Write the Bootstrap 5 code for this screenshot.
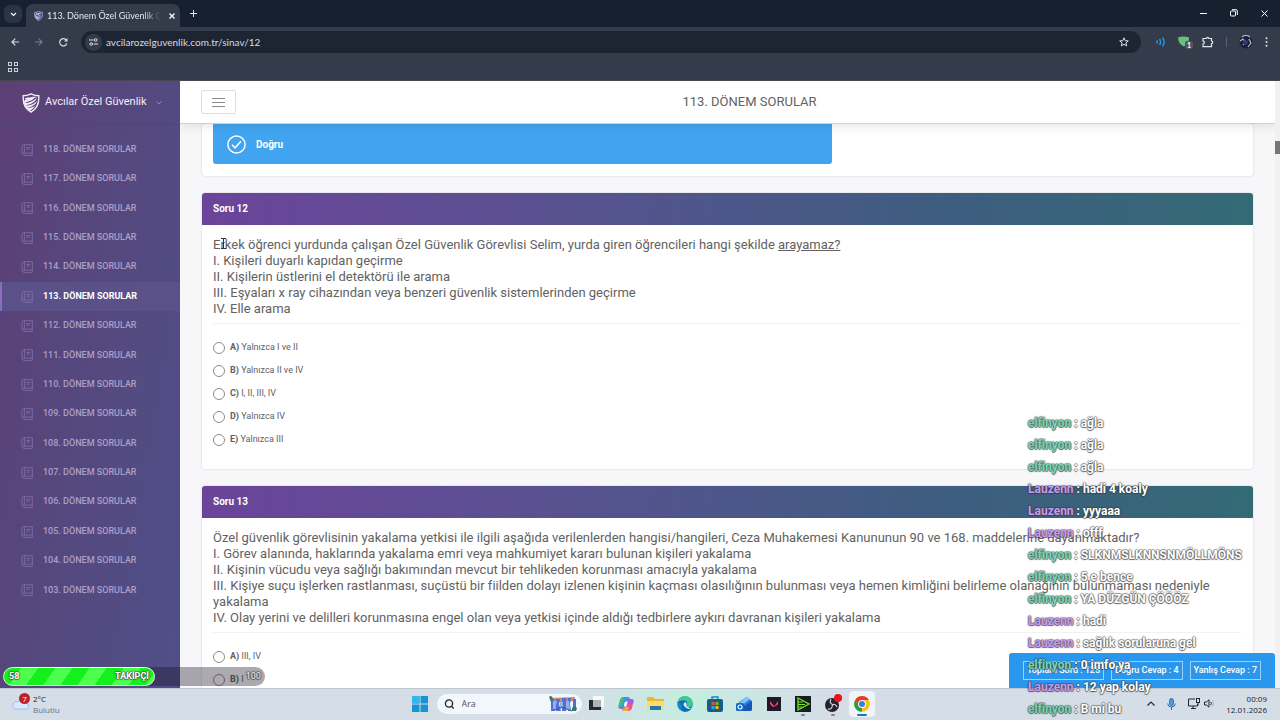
<!DOCTYPE html>
<html lang="tr">
<head>
<meta charset="utf-8">
<meta name="viewport" content="width=device-width, initial-scale=1">
<title>113. Dönem Özel Güvenlik Çıkmış Sorular</title>
<link rel="stylesheet" href="https://cdn.jsdelivr.net/npm/bootstrap@5.3.0/dist/css/bootstrap.min.css">
<style>
body{font-family:Roboto,sans-serif;font-size:13px;color:#626262;background:#f7f6f9}
button{border:0;background:none;padding:0;color:inherit}
svg{display:block;flex:none}
/* browser window */
.chrome-ui{font-family:Lato,sans-serif;font-size:10px;color:#e3e8f0;background:#343b4a}
.tabstrip{height:27px;background:#17202f}
.tab-list-btn{width:18px;height:18px;border-radius:6px;background:#2b3444}
.tab-open{width:154px;height:23px;border-radius:7px 7px 0 0;background:#343b4a}
.tab-title{font-size:9px;width:114px;white-space:nowrap;overflow:hidden;-webkit-mask-image:linear-gradient(90deg,#000 85%,transparent)}
.new-tab{margin:0 0 10px 10px}
.win-btns{gap:23px;padding-bottom:10px}
.toolbar{height:30px}
.tool-nav{padding:0 13px 0 11px}
.tool-ext{gap:12px;padding:0 12px 0 15px}
.omnibox{height:22px;border-radius:11px;background:#1d2533}
.omnibox input{background:none;border:0;color:#d5dae4;font-size:10px;padding:0;outline:0}
.site-info{width:17px;height:17px;border-radius:50%;background:#343b4a}
.bookmarks{height:24px;border-bottom:1px solid #4a4652}
.ext-count{left:7px;top:5px;width:8px;height:8px;font-size:7px;line-height:8px;background:#555;border-radius:2px}
/* sidebar */
.side{width:180px;background:linear-gradient(100deg,#5c3f75 0,#55487e 45%,#4f4f87 100%)}
.side-brand{height:44px;border-bottom:1px solid #4e437a;padding-left:22px;gap:5px;font-size:11px;color:#f1eef6}
.side-nav{min-height:470px;margin-top:10px}
.side-link{padding-left:19px;gap:10px;border-left:2px solid transparent;font-size:9px;font-weight:500;color:#ac9fc8;text-decoration:none}
.side-link svg{color:#7b69a0}
.side-link:hover{color:#fff}
.side-link.active{color:#fff;font-weight:700;background:#5b5189;border-color:#8a6cc0}
/* page header */
.page-top{height:43px;padding:0 12px 0 21px;background:#fff;border-bottom:1px solid #cfcfcf;box-shadow:0 2px 10px rgba(0,0,0,.1);z-index:1}
.menu-btn{width:35px;height:24px;border:1px solid #ddd;border-radius:2px}
.page-top h1{font-size:13px;line-height:18px}
.scroll-track{width:5px;background:#f1f1f1}
.scroll-thumb{height:13px;margin-top:60px;background:#777}
/* questions */
.questions{padding:0 22px}
.q-card{margin-bottom:17px;background:#fff;border-radius:3px;box-shadow:0 0 2px rgba(0,0,0,.18)}
.q-card.answered{padding:0 11px 12px}
.q-result{height:40px;width:619px;max-width:100%;padding-left:14px;gap:10px;background:#41a4f0;border-radius:0 0 3px 3px;font-size:10px}
.q-head{height:32px;padding-left:11px;border-radius:3px 3px 0 0;background:linear-gradient(95deg,#6b449a 0,#5b5092 30%,#3e5d80 70%,#346a76 100%);font-size:10px}
.q-body{padding:12px 12px 18px 11px}
.q-text{line-height:16px;margin:0 0 6px}
.q-line{margin:0;border-color:#ccc}
.q-opts{margin-top:12px}
.q-opts label{height:23px;gap:5px;font-size:9px}
.q-opts input{appearance:none;width:12px;height:12px;margin:0;border:1px solid #8b8b8b;border-radius:50%;background:transparent}
.q-opts input:checked{box-shadow:inset 0 0 0 3px #fff;background:#6b449a}
.q-opts b{font-weight:700}
.caret-i{left:8px;top:1px}
.totals{right:5px;bottom:0;height:35px;padding:0 14px;gap:7px;background:#2a97ee;border-radius:3px 3px 0 0;font-size:9px;color:#fff}
.totals span{border:1px solid #9fd0f8;height:19px;line-height:17px;padding:0 3px;font-weight:500}
/* stream overlays */
.follow{left:3px;bottom:2px;width:262px;height:19px;border-radius:10px;background:rgba(25,20,35,.36);font-size:9px;z-index:3}
.follow-fill{height:19px;border-radius:10px;border:1px solid #d9ffd9;background:repeating-linear-gradient(125deg,#14f01c 0 14px,#4cff4c 14px 28px);padding:0 5px}
.outlined,.chat{color:#fff;font-weight:700;text-shadow:0 1px 1px rgba(60,60,60,.8),0 -1px 1px rgba(60,60,60,.5),1px 0 1px rgba(60,60,60,.5),-1px 0 1px rgba(60,60,60,.5)}
.follow .goal{color:#ddd;font-weight:500}
.chat{left:1028px;bottom:0;font-size:12px;line-height:22px;z-index:5}
.chat .elf{color:#6fd9b5}
.chat .lau{color:#cb97f5}
/* taskbar */
.taskbar{height:32px;padding:0 13px 2px 12px;background:radial-gradient(circle at 54% 0,#c4eee0 0,rgba(196,238,224,0) 130px),#d5dde7;border-top:1px solid #c0c7d0;font-family:"Open Sans",sans-serif;font-size:8px;line-height:11px;color:#20242b}
.task-search{width:145px;height:20px;border-radius:10px;background:#f2f7fb;padding:0 1px 0 7px;margin-left:9px;margin-right:2px}
.task-search input{width:60px;border:0;background:none;font-size:9px;color:#555;outline:0;padding:0}
.task-search input::placeholder{color:#555}
.task-apps{width:292px}
.task-apps button{width:26px;height:26px;border-radius:4px}
.task-apps button.run::after{content:"";position:absolute;left:11px;bottom:1px;width:4px;height:2px;background:#7b8490;border-radius:1px}
.task-apps button.on{background:#eef4f7}
.task-apps button.on::after{left:8px;width:10px;background:#1878b8}
.temp-badge{left:7px;top:-5px;width:11px;height:11px;border-radius:50%;background:#c01f26;line-height:11px;font-size:8px}
.tray{gap:12px}
</style>
</head>
<body>
<svg width="0" height="0" class="position-absolute">
<symbol id="book" viewBox="0 0 12 12"><path d="M2.5.7h8.8v8.400H2.500a1.300 1.300 0 0 0 0 2.300h8.800V9.100M1 10.300V2.200A1.500 1.500 0 0 1 2.500.7M3.400.7v8.400M5.400 3.500h4M5.400 5.200h3" fill="none" stroke="currentColor"/></symbol>
<symbol id="shield" viewBox="0 0 18 20"><path d="M1.200 2.800C4 2.800 6.500 2 9 .8c2.500 1.200 5 2 7.800 2 .4 7-.8 12.700-7.800 16.200C2 15.500.8 9.800 1.200 2.800Z" fill="none" stroke="currentColor" stroke-width="1.400"/><path d="M3 5.200c2-1 4-.4 6-1 2-.7 3.600-.6 6-.2-2 .5-3 1.500-4.500 2.700C8.500 8.200 5.500 8 3 10c2.600.4 7-1 12-5-1 3-5.600 6.500-11.300 7.200 4 .9 8.300-1.200 11.300-4.200-.8 3.400-5 6-9.500 6.600 3 .7 6-.4 8-2-1.500 2.600-3.500 4-5.500 5-3.500-1.800-6-5-6-9.600 1.500-1.200 3-1.400 4.500-2L3 6.700Z" fill="currentColor"/></symbol>
</svg>
<div class="vh-100 d-flex flex-column overflow-hidden position-relative">

<header class="chrome-ui">
  <div class="tabstrip d-flex align-items-end">
    <button class="tab-list-btn ms-1 mb-1 d-flex align-items-center justify-content-center" aria-label="Sekmeler"><svg width="7" height="5" viewBox="0 0 7 5"><path d="m1 1 2.500 2.500L6 1" fill="none" stroke="#fff" stroke-width="1.200"/></svg></button>
    <div class="tab-open ms-1 ps-1 d-flex align-items-center">
      <svg class="ms-1" width="9" height="10" style="color:#c3c2ff"><use href="#shield"/></svg>
      <span class="tab-title ms-1">113. Dönem Özel Güvenlik Çıkm</span>
      <button class="ms-2" aria-label="Kapat"><svg width="6" height="6"><path d="m.5.5 5 5m0-5-5 5" stroke="#fff" stroke-width="1.200"/></svg></button>
    </div>
    <button class="new-tab" aria-label="Yeni sekme"><svg width="7" height="7"><path d="M3.500 0v7M0 3.500h7" stroke="#dfe3ea"/></svg></button>
    <div class="win-btns d-flex align-items-center ms-auto me-2 pe-1">
      <button aria-label="Küçült"><svg width="7" height="7"><path d="M0 3.500h7" stroke="#fff"/></svg></button>
      <button aria-label="Önceki boyut"><svg width="8" height="8"><rect x=".5" y="2" width="5" height="5" rx="1" fill="none" stroke="#fff"/><path d="M2 .7h4q1.300 0 1.300 1.300v4" fill="none" stroke="#fff"/></svg></button>
      <button aria-label="Pencereyi kapat"><svg width="7" height="7"><path d="m.5.5 6 6m0-6-6 6" stroke="#fff"/></svg></button>
    </div>
  </div>
  <div class="toolbar d-flex align-items-center">
    <div class="tool-nav d-flex align-items-center gap-3">
      <button aria-label="Geri"><svg width="8" height="8"><path d="M8 4H1m3.300-3.300L1 4l3.300 3.300" fill="none" stroke="#d6dce6" stroke-width="1.200"/></svg></button>
      <button aria-label="İleri"><svg width="8" height="8"><path d="M0 4h7M3.700.7 7 4 3.700 7.300" fill="none" stroke="#747c8b" stroke-width="1.200"/></svg></button>
      <button aria-label="Yenile"><svg width="9" height="9" viewBox="0 0 9 9"><path d="M7.800 5.300A3.600 3.600 0 1 1 7.400 2.400" fill="none" stroke="#d6dce6" stroke-width="1.200"/><path d="M8.500 0v3.400H5.100Z" fill="#d6dce6"/></svg></button>
    </div>
    <div class="omnibox flex-grow-1 d-flex align-items-center ps-1">
      <button class="site-info d-flex align-items-center justify-content-center" aria-label="Site bilgileri"><svg width="9" height="8"><path d="M0 2h4.500M4.500 6H9" stroke="#dce1e9" stroke-width="1.100"/><circle cx="6.700" cy="2" r="1.300" fill="none" stroke="#dce1e9"/><circle cx="2.200" cy="6" r="1.300" fill="none" stroke="#dce1e9"/></svg></button>
      <input class="flex-grow-1 ms-1" type="text" aria-label="Adres" value="avcilarozelguvenlik.com.tr/sinav/12">
      <button class="me-2 pe-1" aria-label="Yer işareti"><svg width="10" height="10" viewBox="0 0 10 10"><path d="m5 .8 1.200 2.900 3.100.2-2.400 2 .8 3L5 7.300 2.300 8.900l.8-3-2.400-2 3.100-.2Z" fill="none" stroke="#e0e4ec" stroke-width="1"/></svg></button>
    </div>
    <div class="tool-ext d-flex align-items-center">
      <svg width="10" height="10" viewBox="0 0 10 10" fill="none" stroke="#2694e6" stroke-width="1.500"><path d="M.7 3.500q1 1.500 0 3M3.500 2q2.200 3 0 6M6.500.5q3.400 4.500 0 9"/></svg>
      <span class="position-relative d-flex"><svg width="12" height="12" viewBox="0 0 12 12"><path d="M0 1.500Q5-.5 11 1.500q.5 6-5 9Q.3 8 0 1.500Z" fill="#69c07d"/></svg><span class="ext-count position-absolute text-white text-center fw-bold">1</span></span>
      <button aria-label="Uzantılar"><svg width="12" height="12" viewBox="0 0 12 12"><path d="M1 2.500h3.500a1.200 1.200 0 0 1 2.400 0H9.500V5a1.300 1.300 0 0 1 0 2.600v3H1V8a1.400 1.400 0 0 0 0-2.800Z" fill="none" stroke="#dfe3ea" stroke-width="1.200"/></svg></button>
      <svg width="1" height="10"><path d="M.5 0v10" stroke="#596273"/></svg>
      <button aria-label="Profil"><svg width="14" height="14" viewBox="0 0 14 14"><circle cx="7" cy="7" r="6.500" fill="#1a2036"/><path d="M3 2q4-3 8 0M1 6l3-2 2 3-2 3M10 4l2 4-3 4" fill="none" stroke="#b9bfca" stroke-width="1.200"/><path d="m5 4 4 2-1 4-4-1Z" fill="#303c79"/></svg></button>
      <button aria-label="Menü"><svg width="3" height="10" fill="#e0e4ec"><circle cx="1.500" cy="1.300" r="1"/><circle cx="1.500" cy="5" r="1"/><circle cx="1.500" cy="8.700" r="1"/></svg></button>
    </div>
  </div>
  <div class="bookmarks d-flex align-items-center ps-2">
    <button class="mb-1" aria-label="Uygulamalar"><svg width="10" height="10" fill="none" stroke="#cbd1dc"><rect x=".5" y=".5" width="3" height="3"/><rect x="6.500" y=".5" width="3" height="3"/><rect x=".5" y="6.500" width="3" height="3"/><rect x="6.500" y="6.500" width="3" height="3"/></svg></button>
  </div>
</header>

<div class="flex-grow-1 d-flex position-relative overflow-hidden">
  <aside class="side flex-shrink-0">
    <div class="side-brand d-flex align-items-center">
      <svg width="18" height="20"><use href="#shield"/></svg><span>Avcılar Özel Güvenlik</span>
      <svg class="ms-1" width="6" height="4"><path d="m.5.500 2.500 2.500L5.500.5" fill="none" stroke="#9385b5"/></svg>
    </div>
    <nav class="side-nav d-flex flex-column">
      <a class="side-link flex-fill d-flex align-items-center" href="#"><svg width="12" height="12"><use href="#book"/></svg>118. DÖNEM SORULAR</a>
      <a class="side-link flex-fill d-flex align-items-center" href="#"><svg width="12" height="12"><use href="#book"/></svg>117. DÖNEM SORULAR</a>
      <a class="side-link flex-fill d-flex align-items-center" href="#"><svg width="12" height="12"><use href="#book"/></svg>116. DÖNEM SORULAR</a>
      <a class="side-link flex-fill d-flex align-items-center" href="#"><svg width="12" height="12"><use href="#book"/></svg>115. DÖNEM SORULAR</a>
      <a class="side-link flex-fill d-flex align-items-center" href="#"><svg width="12" height="12"><use href="#book"/></svg>114. DÖNEM SORULAR</a>
      <a class="side-link active flex-fill d-flex align-items-center" href="#"><svg width="12" height="12"><use href="#book"/></svg>113. DÖNEM SORULAR</a>
      <a class="side-link flex-fill d-flex align-items-center" href="#"><svg width="12" height="12"><use href="#book"/></svg>112. DÖNEM SORULAR</a>
      <a class="side-link flex-fill d-flex align-items-center" href="#"><svg width="12" height="12"><use href="#book"/></svg>111. DÖNEM SORULAR</a>
      <a class="side-link flex-fill d-flex align-items-center" href="#"><svg width="12" height="12"><use href="#book"/></svg>110. DÖNEM SORULAR</a>
      <a class="side-link flex-fill d-flex align-items-center" href="#"><svg width="12" height="12"><use href="#book"/></svg>109. DÖNEM SORULAR</a>
      <a class="side-link flex-fill d-flex align-items-center" href="#"><svg width="12" height="12"><use href="#book"/></svg>108. DÖNEM SORULAR</a>
      <a class="side-link flex-fill d-flex align-items-center" href="#"><svg width="12" height="12"><use href="#book"/></svg>107. DÖNEM SORULAR</a>
      <a class="side-link flex-fill d-flex align-items-center" href="#"><svg width="12" height="12"><use href="#book"/></svg>106. DÖNEM SORULAR</a>
      <a class="side-link flex-fill d-flex align-items-center" href="#"><svg width="12" height="12"><use href="#book"/></svg>105. DÖNEM SORULAR</a>
      <a class="side-link flex-fill d-flex align-items-center" href="#"><svg width="12" height="12"><use href="#book"/></svg>104. DÖNEM SORULAR</a>
      <a class="side-link flex-fill d-flex align-items-center" href="#"><svg width="12" height="12"><use href="#book"/></svg>103. DÖNEM SORULAR</a>
    </nav>
  </aside>

  <main class="flex-grow-1 d-flex flex-column overflow-hidden">
    <div class="page-top d-flex align-items-center position-relative flex-shrink-0">
      <button class="menu-btn d-flex align-items-center justify-content-center" aria-label="Menüyü aç"><svg width="13" height="9"><path d="M0 .500h13M0 4.500h13M0 8.500h13" stroke="#8a8a8a"/></svg></button>
      <h1 class="flex-grow-1 text-center fw-normal m-0">113. DÖNEM SORULAR</h1>
    </div>
    <div class="questions flex-grow-1 overflow-hidden">
      <section class="q-card answered">
        <div class="q-result d-flex align-items-center text-white fw-bold"><svg width="19" height="19" viewBox="0 0 19 19" fill="none" stroke="#fff" stroke-width="1.500"><circle cx="9.500" cy="9.500" r="8.600"/><path d="m5 9.800 3 3 6-6.500"/></svg>Doğru</div>
      </section>
      <section class="q-card">
        <h2 class="q-head d-flex align-items-center text-white fw-bold m-0">Soru 12</h2>
        <div class="q-body">
          <p class="q-text position-relative">Erkek öğrenci yurdunda çalışan Özel Güvenlik Görevlisi Selim, yurda giren öğrencileri hangi şekilde <u>arayamaz?</u><br>I. Kişileri duyarlı kapıdan geçirme<br>II. Kişilerin üstlerini el detektörü ile arama<br>III. Eşyaları x ray cihazından veya benzeri güvenlik sistemlerinden geçirme<br>IV. Elle arama
            <svg class="caret-i position-absolute" width="5" height="11"><path d="M0 .500h5M0 10.500h5M2.500.5v10" stroke="#333"/></svg></p>
          <hr class="q-line">
          <div class="q-opts d-flex flex-column align-items-start">
            <label class="d-flex align-items-center"><input type="radio" name="q12"><span><b>A)</b> Yalnızca I ve II</span></label>
            <label class="d-flex align-items-center"><input type="radio" name="q12"><span><b>B)</b> Yalnızca II ve IV</span></label>
            <label class="d-flex align-items-center"><input type="radio" name="q12"><span><b>C)</b> I, II, III, IV</span></label>
            <label class="d-flex align-items-center"><input type="radio" name="q12"><span><b>D)</b> Yalnızca IV</span></label>
            <label class="d-flex align-items-center"><input type="radio" name="q12"><span><b>E)</b> Yalnızca III</span></label>
          </div>
        </div>
      </section>
      <section class="q-card">
        <h2 class="q-head d-flex align-items-center text-white fw-bold m-0">Soru 13</h2>
        <div class="q-body">
          <p class="q-text">Özel güvenlik görevlisinin yakalama yetkisi ile ilgili aşağıda verilenlerden hangisi/hangileri, Ceza Muhakemesi Kanununun 90 ve 168. maddelerine dayanmaktadır?<br>I. Görev alanında, haklarında yakalama emri veya mahkumiyet kararı bulunan kişileri yakalama<br>II. Kişinin vücudu veya sağlığı bakımından mevcut bir tehlikeden korunması amacıyla yakalama<br>III. Kişiye suçu işlerken rastlanması, suçüstü bir fiilden dolayı izlenen kişinin kaçması olasılığının bulunması veya hemen kimliğini belirleme olanağının bulunmaması nedeniyle yakalama<br>IV. Olay yerini ve delilleri korunmasına engel olan veya yetkisi içinde aldığı tedbirlere aykırı davranan kişileri yakalama</p>
          <hr class="q-line">
          <div class="q-opts d-flex flex-column align-items-start">
            <label class="d-flex align-items-center"><input type="radio" name="q13"><span><b>A)</b> III, IV</span></label>
            <label class="d-flex align-items-center"><input type="radio" name="q13"><span><b>B)</b> I</span></label>
          </div>
        </div>
      </section>
    </div>
  </main>
  <div class="scroll-track flex-shrink-0"><div class="scroll-thumb"></div></div>

  <div class="totals position-absolute d-flex align-items-center"><span>Toplam Soru : 125</span><span>Doğru Cevap : 4</span><span>Yanlış Cevap : 7</span></div>
  <div class="follow position-absolute d-flex align-items-center justify-content-between">
    <div class="follow-fill outlined d-flex align-items-center justify-content-between" style="width:58%"><span>58</span><span>TAKİPÇİ</span></div>
    <span class="outlined goal pe-1">100</span>
  </div>
</div>

<footer class="taskbar d-flex align-items-center flex-shrink-0">
  <div class="d-flex align-items-center" style="flex:1 0 0">
    <span class="position-relative d-flex"><svg width="17" height="12" viewBox="0 0 17 12"><path d="M3.500 11h10a3 3 0 0 0 .3-6A4.500 4.500 0 0 0 5.500 4 3.500 3.500 0 0 0 3.500 11Z" fill="#d8e8ff" stroke="#8fb2ea" stroke-width=".800"/></svg><span class="temp-badge position-absolute text-white text-center">7</span></span>
    <span class="ms-1">2°C<br><span class="text-secondary">Bulutlu</span></span>
  </div>
  <div class="d-flex align-items-center ms-2">
    <button aria-label="Başlat"><svg width="16" height="16"><path d="M0 0h7.500v7.500H0ZM8.500 0H16v7.500H8.500ZM0 8.500h7.500V16H0ZM8.500 8.500H16V16H8.500Z" fill="#1595d3"/><path d="M0 0h7.500v7.500H0Z" fill="#36b6e8"/></svg></button>
    <div class="task-search d-flex align-items-center">
      <svg width="10" height="10" fill="none" stroke="#222" stroke-width="1.300"><circle cx="5" cy="4.500" r="3.600"/><path d="m7.500 7.200 2.200 2.400"/></svg>
      <input class="ms-2" type="search" aria-label="Ara" placeholder="Ara">
      <svg class="ms-auto me-1" width="28" height="17" viewBox="0 0 28 17"><path d="M1 3 26 2v4L3 8Z" fill="#d08a72"/><path d="M2 4h3l2 6-1 6H2Zm5 0h4l-1 5 2 7H7Zm6-1h4l2 8-2 5h-4Zm6 0h3l-1 6 1 7h-3Zm5 1h3v12h-3Z" fill="#536fd0"/><path d="M4 6h4l-2 8H4Zm7 1h3v5l-3 3Zm6-1h3l1 9h-4Z" fill="#8eb3ec"/><path d="M0 2q3-3 4 2L2 7Zm23 11q2-3 5 0l-1 3h-4Z" fill="#357d64"/><path d="m5 15 8-3 10 4" stroke="#4650a0" fill="none"/></svg>
    </div>
    <div class="task-apps d-flex justify-content-between">
      <button class="d-flex align-items-center justify-content-center" aria-label="Görev görünümü"><svg width="15" height="15"><path d="M4 0h11v11H4Z" fill="#f7f8fa"/><path d="M0 4h4v7h8v3H0Z" fill="#25282d"/><path d="M4 4h8v7H4Z" fill="#aeb3ba"/></svg></button>
      <button class="d-flex align-items-center justify-content-center" aria-label="Copilot"><svg width="16" height="16" viewBox="0 0 16 16"><path d="M6 1h4q1.500 0 2 2l.5 2H8L6.500 11q-.6 2-2.500 2H3q-3 0-2.400-3L2 4q.8-3 4-3Z" fill="#3598e6"/><path d="M2 4q.8-3 4-3L4 9 1 12q-1-1 0-4Z" fill="#4dbb75"/><path d="M10 15H6q-1.500 0-2-2l-.5-2H8l1.500-6q.6-2 2.500-2h1q3 0 2.400 3L14 12q-.8 3-4 3Z" fill="#e65792"/><path d="M4 13q2 0 3-2h4l-1 4H6q-1.500 0-2-2Z" fill="#f4a62e"/><path d="M9.500 5q.6-2 2.500-2h1q3 0 2.400 3l-.4 2H11Z" fill="#a95be0"/><path d="M6.700 6h2.800l-1 4H5.800Z" fill="#f3f5fa"/></svg></button>
      <button class="d-flex align-items-center justify-content-center" aria-label="Dosya Gezgini"><svg width="17" height="15"><path d="M0 2q0-1 1-1h5l2 2h8q1 0 1 1v10H0Z" fill="#eeb532"/><path d="M0 5h17v8q0 1-1 1H1q-1 0-1-1Z" fill="#ffda69"/><path d="M3 10h11v4H3Z" fill="#2677b5"/></svg></button>
      <button class="d-flex align-items-center justify-content-center" aria-label="Edge"><svg width="16" height="16" viewBox="0 0 16 16"><circle cx="8" cy="8" r="7.800" fill="#1686cf"/><path d="M.3 7Q1 .4 8 .2q7 .3 7.700 6.800 0 4-4.200 4-2.500 0-2-1.500Q11 6.500 7 5 3 4.500.3 7Z" fill="#40c98d"/><path d="M.3 7Q3 3.500 8 4.500q3 1 2 4.500-.8 1-.5 1.600 2 2.800 5 1.700-3 4-7.500 3.500-3.500-2-2.500-6Q4 6 .3 7Z" fill="#106bb2"/><path d="M8.500 6q-3 1-1.500 4 3 4 7 2.500-1.500-.5-3-1.500-2-.5-1.500-1.500Q10.500 8 8.500 6Z" fill="#d5eef3"/></svg></button>
      <button class="d-flex align-items-center justify-content-center" aria-label="Microsoft Store"><svg width="16" height="16"><path d="M5 4V1h6v3" fill="none" stroke="#1685bd" stroke-width="1.300"/><rect y="3" width="16" height="13" rx="2" fill="#185c89"/><path d="M4.500 6h3v3h-3Z" fill="#f25022"/><path d="M8.500 6h3v3h-3Z" fill="#7fba00"/><path d="M4.500 10h3v3h-3Z" fill="#24a9ef"/><path d="M8.500 10h3v3h-3Z" fill="#ffb900"/></svg></button>
      <button class="d-flex align-items-center justify-content-center" aria-label="Outlook"><svg width="17" height="16"><path d="m3 6 8-5 5 4v8q0 2-2 2H5q-2 0-2-2Z" fill="#2a7be0"/><path d="m3 7 8-6 3 2-9 7Z" fill="#7fc7fb"/><path d="m7 11 9-6v8q0 2-2 2H7Z" fill="#1557b4"/><rect y="7" width="8" height="8" rx="1.500" fill="#1167c8"/><circle cx="4" cy="11" r="2" fill="none" stroke="#fff" stroke-width="1.200"/></svg></button>
      <button class="d-flex align-items-center justify-content-center" aria-label="Valorant"><svg width="14" height="14"><path d="M0 0h14v14H0Z" fill="#20172a"/><path d="m3 4 5 6H6L3 7Zm8 0v3L9 9H7.500Z" fill="#f04b60"/></svg></button>
      <button class="run position-relative d-flex align-items-center justify-content-center" aria-label="Oynatıcı"><svg width="16" height="16"><path d="M0 0h16v16H0Z" fill="#15201c"/><path d="m3 2 11 6-11 6Z" fill="none" stroke="#79df31" stroke-width="1.300"/><path d="M3 6h5M3 8.500h7M3 11h4" stroke="#79df31"/></svg></button>
      <button class="run position-relative d-flex align-items-center justify-content-center" aria-label="OBS"><svg width="18" height="20" viewBox="0 0 18 20"><circle cx="8" cy="11" r="7" fill="#24232a"/><path d="M7 5q-2 4 1.500 5.500M13 13q-2-4-5-2M4 15q4 1 4.500-4" fill="none" stroke="#c9c9ce" stroke-width="1.300"/><circle cx="14" cy="4" r="4" fill="#ee1119"/></svg></button>
      <button class="run on position-relative d-flex align-items-center justify-content-center" aria-label="Chrome"><svg width="16" height="16" viewBox="0 0 16 16"><circle cx="8" cy="8" r="7.800" fill="#fbc116"/><path d="M1.200 4.100A7.800 7.800 0 0 1 14.800 4.100H8L4.600 10Z" fill="#e33b2e"/><path d="M1.200 4.100 4.600 10 8 11.900 7.700 15.800A7.800 7.800 0 0 1 1.200 4.100Z" fill="#269b4b"/><circle cx="8" cy="8" r="3.900" fill="#fff"/><circle cx="8" cy="8" r="3" fill="#357ce5"/></svg></button>
    </div>
  </div>
  <div class="tray d-flex align-items-center justify-content-end" style="flex:1 0 0">
    <button aria-label="Gizli simgeler"><svg width="8" height="5"><path d="m.5 4.500 3.500-3.500 3.500 3.500" fill="none" stroke="#252b33" stroke-width="1.200"/></svg></button>
    <svg width="9" height="12" viewBox="0 0 9 12"><rect x="2.700" y=".5" width="3.600" height="7" rx="1.800" fill="#5d9bde" stroke="#2668af"/><path d="M.7 5.500q0 3.500 3.800 3.500t3.800-3.500M4.500 9v3" fill="none" stroke="#2668af"/></svg>
    <span class="d-flex align-items-center gap-1">
      <svg width="12" height="11" fill="none" stroke="#22272e"><path d="M7 1H.5v7h9V6M3 10.500h5M5 8v2.500"/><rect x="8.500" y=".5" width="3" height="4"/><path d="M10 4.500v3"/></svg>
      <svg width="10" height="9" fill="none" stroke="#22272e"><path d="M.5 3h2L5 .8v7.400L2.500 6h-2ZM6.800 3q1.200 1.500 0 3"/><path d="M8.500 1.500q2 3 0 6" stroke="#aab"/></svg>
    </span>
    <span class="text-end">00:09<br>12.01.2026</span>
  </div>
</footer>

<div class="chat position-absolute text-nowrap">
  <div><span class="elf">elfinyon</span> : ağla</div>
  <div><span class="elf">elfinyon</span> : ağla</div>
  <div><span class="elf">elfinyon</span> : ağla</div>
  <div><span class="lau">Lauzenn</span> : hadi 4 koaly</div>
  <div><span class="lau">Lauzenn</span> : yyyaaa</div>
  <div><span class="lau">Lauzenn</span> : offf</div>
  <div><span class="elf">elfinyon</span> : SLKNMSLKNNSNMÖLLMÖNS</div>
  <div><span class="elf">elfinyon</span> : 5 e bence</div>
  <div><span class="elf">elfinyon</span> : YA DÜZGÜN ÇÖÖÖZ</div>
  <div><span class="lau">Lauzenn</span> : hadi</div>
  <div><span class="lau">Lauzenn</span> : sağlık sorularuna gel</div>
  <div><span class="elf">elfinyon</span> : 0 imfo ya</div>
  <div><span class="lau">Lauzenn</span> : 12 yap kolay</div>
  <div><span class="elf">elfinyon</span> : B mi bu</div>
</div>
</div>
<script src="https://cdn.jsdelivr.net/npm/bootstrap@5.3.0/dist/js/bootstrap.bundle.min.js"></script>
</body>
</html>
